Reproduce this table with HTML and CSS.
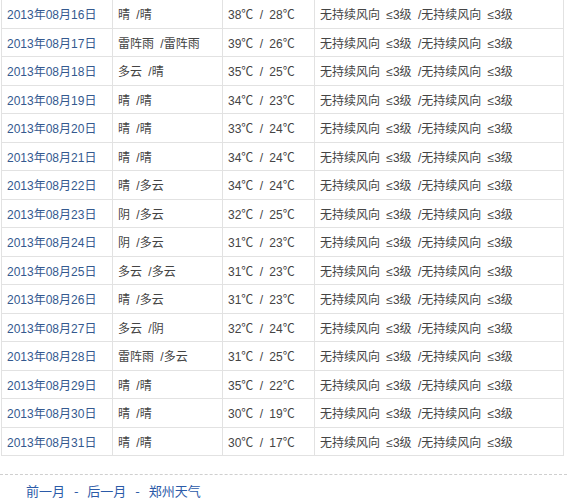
FILE: index.html
```html
<!DOCTYPE html>
<html lang="zh-CN">
<head>
<meta charset="utf-8">
<link rel="stylesheet" href="styles.css">
</head>
<body>
<table class="weather">
<tr><td class="date">2013年08月16日</td><td>晴 /晴</td><td>38℃ / 28℃</td><td>无持续风向 ≤3级 /无持续风向 ≤3级</td></tr>
<tr><td class="date">2013年08月17日</td><td>雷阵雨 /雷阵雨</td><td>39℃ / 26℃</td><td>无持续风向 ≤3级 /无持续风向 ≤3级</td></tr>
<tr><td class="date">2013年08月18日</td><td>多云 /晴</td><td>35℃ / 25℃</td><td>无持续风向 ≤3级 /无持续风向 ≤3级</td></tr>
<tr><td class="date">2013年08月19日</td><td>晴 /晴</td><td>34℃ / 23℃</td><td>无持续风向 ≤3级 /无持续风向 ≤3级</td></tr>
<tr><td class="date">2013年08月20日</td><td>晴 /晴</td><td>33℃ / 24℃</td><td>无持续风向 ≤3级 /无持续风向 ≤3级</td></tr>
<tr><td class="date">2013年08月21日</td><td>晴 /晴</td><td>34℃ / 24℃</td><td>无持续风向 ≤3级 /无持续风向 ≤3级</td></tr>
<tr><td class="date">2013年08月22日</td><td>晴 /多云</td><td>34℃ / 24℃</td><td>无持续风向 ≤3级 /无持续风向 ≤3级</td></tr>
<tr><td class="date">2013年08月23日</td><td>阴 /多云</td><td>32℃ / 25℃</td><td>无持续风向 ≤3级 /无持续风向 ≤3级</td></tr>
<tr><td class="date">2013年08月24日</td><td>阴 /多云</td><td>31℃ / 23℃</td><td>无持续风向 ≤3级 /无持续风向 ≤3级</td></tr>
<tr><td class="date">2013年08月25日</td><td>多云 /多云</td><td>31℃ / 23℃</td><td>无持续风向 ≤3级 /无持续风向 ≤3级</td></tr>
<tr><td class="date">2013年08月26日</td><td>晴 /多云</td><td>31℃ / 23℃</td><td>无持续风向 ≤3级 /无持续风向 ≤3级</td></tr>
<tr><td class="date">2013年08月27日</td><td>多云 /阴</td><td>32℃ / 24℃</td><td>无持续风向 ≤3级 /无持续风向 ≤3级</td></tr>
<tr><td class="date">2013年08月28日</td><td>雷阵雨 /多云</td><td>31℃ / 25℃</td><td>无持续风向 ≤3级 /无持续风向 ≤3级</td></tr>
<tr><td class="date">2013年08月29日</td><td>晴 /晴</td><td>35℃ / 22℃</td><td>无持续风向 ≤3级 /无持续风向 ≤3级</td></tr>
<tr><td class="date">2013年08月30日</td><td>晴 /晴</td><td>30℃ / 19℃</td><td>无持续风向 ≤3级 /无持续风向 ≤3级</td></tr>
<tr><td class="date">2013年08月31日</td><td>晴 /晴</td><td>30℃ / 17℃</td><td>无持续风向 ≤3级 /无持续风向 ≤3级</td></tr>
</table>
<div class="footer">
<a class="link">前一月</a> - <a class="link">后一月</a> - <a class="link">郑州天气</a>
</div>
</body>
</html>
```
FILE: styles.css
```css
html, body {
  margin: 0;
  padding: 0;
  background: #fff;
}
body {
  font-family: "Liberation Sans", "Noto Sans CJK SC", sans-serif;
  font-size: 12px;
  color: #444;
}
.weather {
  border-collapse: collapse;
  margin-left: 1px;
  width: 563px;
  table-layout: fixed;
}
.weather td {
  border: 1px solid #e2e2e2;
  height: 27.5px;
  padding: 0 0 0 5px;
  white-space: pre;
  word-spacing: 3px;
  vertical-align: middle;
}
.weather tr:first-child td {
  border-top: none;
}
.weather td:nth-child(1) { width: 105px; }
.weather td:nth-child(2) { width: 104px; }
.weather td:nth-child(3) { width: 86px; }
.weather td.date {
  color: #34598f;
  word-spacing: 0;
}
.footer {
  margin-top: 18px;
  border-top: 1px dashed #cfcfcf;
  padding: 8px 0 0 26px;
  font-family: "Noto Sans CJK SC", sans-serif;
  font-size: 13px;
  line-height: 16px;
  color: #2b5aa8;
  word-spacing: 6px;
}
.link {
  color: #2b5aa8;
  word-spacing: 0;
}
```
